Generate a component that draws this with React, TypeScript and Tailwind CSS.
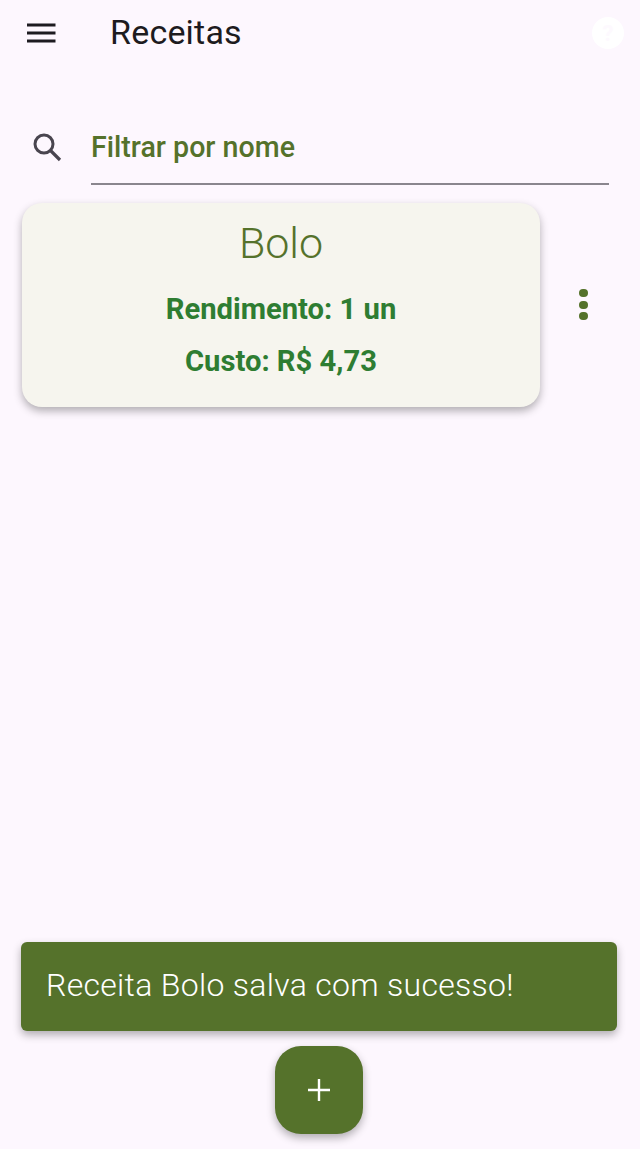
export default function App() {
  return (
    <div className="h-[1149px] w-[640px] overflow-hidden bg-[#fdf7fe] flex flex-col font-['Roboto',sans-serif]">
      <header className="h-[66px] flex items-center pl-[26px] pr-[15px]">
        <svg width="30" height="20" viewBox="0 0 30 20" className="shrink-0">
          <path d="M1 2h28.5M1 10h28.5M1 18h28.5" stroke="#1d1b20" strokeWidth="3" />
        </svg>
        <h1 className="ml-[54px] pb-[2px] text-[34px] leading-none font-normal tracking-[0.2px] text-[#1d1b20]">Receitas</h1>
        <svg width="34" height="34" viewBox="0 0 34 34" className="ml-auto shrink-0">
          <circle cx="17" cy="17" r="16" fill="#ffffff" />
          <text x="17" y="25" textAnchor="middle" fontSize="22" fontWeight="700" fill="#fdf9fe" fontFamily="Roboto">?</text>
        </svg>
      </header>
      <div className="mt-[44px] flex pl-[32px] pr-[31px]">
        <svg width="30" height="30" viewBox="0 0 30 30" className="shrink-0 mt-[22px]">
          <circle cx="12" cy="12" r="9" fill="none" stroke="#49454f" strokeWidth="3" />
          <path d="M18.5 18.5L28 28" stroke="#49454f" strokeWidth="3.2" />
        </svg>
        <div className="ml-[29px] flex-1 h-[75px] border-b-2 border-[#8a868e] text-[28.6px] font-medium text-[#55722b] leading-[38px] pt-[18px]">
          Filtrar por nome
        </div>
      </div>
      <div className="mt-[18px] flex pl-[22px]">
        <div className="w-[518px] h-[204px] rounded-[20px] bg-[#f6f5ee] shadow-[0_4px_8px_rgba(0,0,0,0.3)] flex flex-col items-center">
          <div className="mt-[15px] text-[43px] leading-[50px] font-light text-[#55722b]">Bolo</div>
          <div className="mt-[24px] text-[29.2px] leading-[34px] font-bold text-[#2e7d32]">Rendimento: 1 un</div>
          <div className="mt-[18px] text-[29.2px] leading-[34px] font-bold text-[#2e7d32]">Custo: R$ 4,73</div>
        </div>
        <div className="ml-[39px] mt-[86px] flex flex-col gap-[3.5px]">
          <span className="w-[9px] h-[8px] rounded-full bg-[#55722b]" />
          <span className="w-[9px] h-[8px] rounded-full bg-[#55722b]" />
          <span className="w-[9px] h-[8px] rounded-full bg-[#55722b]" />
        </div>
      </div>
      <div className="flex-1" />
      <div className="mx-[21px] w-[596px] h-[89px] rounded-[6px] bg-[#55722b] shadow-[0_4px_8px_rgba(0,0,0,0.3)] flex items-center pl-[25px] pb-[3px] text-[32px] tracking-[0.3px] font-light text-white">
        Receita Bolo salva com sucesso!
      </div>
      <div className="mt-[15px] mb-[15px] ml-[275px] w-[88px] h-[88px] rounded-[26px] bg-[#55722b] shadow-[0_4px_8px_rgba(0,0,0,0.3)] flex items-center justify-center">
        <svg width="22" height="22" viewBox="0 0 22 22">
          <path d="M11 0v22M0 11h22" stroke="#fff" strokeWidth="2.4" />
        </svg>
      </div>
    </div>
  );
}
